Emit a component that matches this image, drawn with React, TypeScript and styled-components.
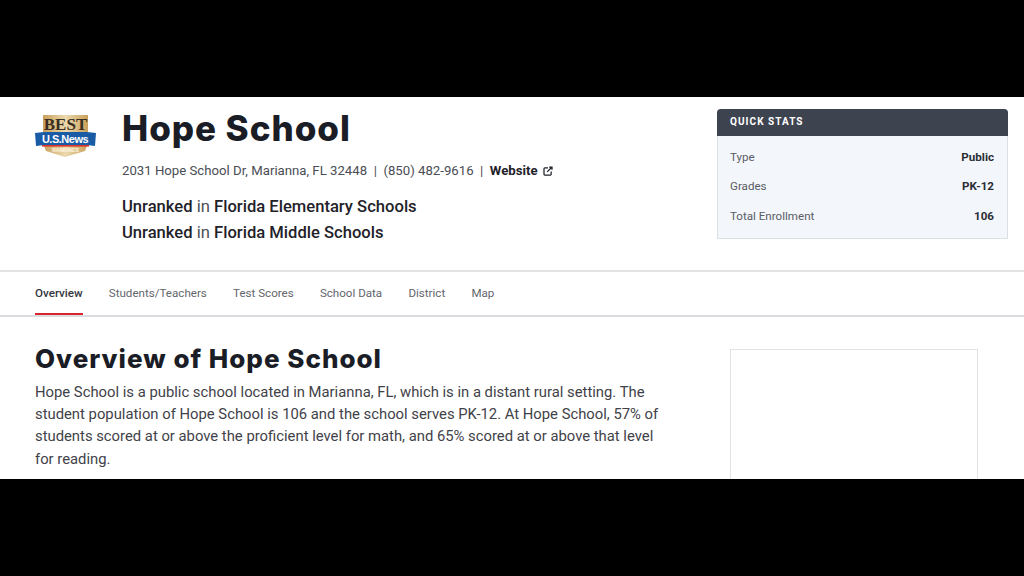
import React from "react";
import styled, { createGlobalStyle } from "styled-components";

const Global = createGlobalStyle`
  html, body { margin: 0; padding: 0; background: #000; }
  body { font-family: Roboto, "Liberation Sans", sans-serif; color: #1f2229; }
  #root { width: 1024px; height: 576px; }
`;
const Frame = styled.div`
  width: 1024px; height: 576px; background: #000; padding-top: 97px; box-sizing: border-box;
`;
const Page = styled.div`
  width: 1024px; height: 382px; background: #fff; overflow: hidden; display: flex; flex-direction: column;
`;
const Header = styled.header`
  height: 175px; box-sizing: border-box; display: flex; border-bottom: 2px solid #e2e3e5; flex: none;
`;
const LogoBox = styled.div`
  width: 122px; flex: none; padding: 18px 0 0 35px; box-sizing: border-box;
`;
const Info = styled.div`
  width: 595px; flex: none; display: flex; flex-direction: column;
`;
const Title = styled.h1`
  margin: 9px 0 0; font: 800 35px/44px Inter, sans-serif; letter-spacing: 0.95px; color: #1a1d26;
`;
const Contact = styled.div`
  margin-top: 11px; font-size: 13.2px; line-height: 20px; color: #4a4d55; display: flex; align-items: center; white-space: pre;
`;
const WebLink = styled.span`
  font-weight: 700; color: #1f2229;
`;
const Rank = styled.div`
  font-size: 16.6px; line-height: 26px; color: #4a4d55;
  b { font-weight: 500; color: #1f2229; }
`;
const Ranks = styled.div`
  margin-top: 13px;
`;
const Stats = styled.aside`
  width: 291px; height: 130px; margin-top: 12px; box-sizing: border-box; border: 1px solid #dcdfe3; border-top: 0;
  border-radius: 4px 4px 0 0; background: #f3f6fa; display: flex; flex-direction: column;
`;
const StatsHead = styled.div`
  height: 27px; margin: 0 -1px; background: #3e4350; border-radius: 4px 4px 0 0; color: #fff; flex: none;
  font-size: 10px; font-weight: 700; letter-spacing: 1.05px; line-height: 26px; padding-left: 13px;
`;
const StatRows = styled.div`
  padding: 6.4px 13px 0 12px; display: flex; flex-direction: column;
`;
const StatRow = styled.div`
  height: 29.3px; display: flex; justify-content: space-between; align-items: center; font-size: 11.6px; color: #5a5d65;
  b { font-weight: 700; color: #2a2d35; }
`;
const Tabs = styled.nav`
  height: 45px; flex: none; box-sizing: border-box; display: flex; gap: 26.2px; padding-left: 35px; border-bottom: 2px solid #dcdde0;
`;
const Tab = styled.a<{ $active?: boolean }>`
  font-size: 11.6px; line-height: 42px; height: 43px; box-sizing: border-box; color: ${p => (p.$active ? "#33363d" : "#63666d")};
  font-weight: ${p => (p.$active ? 500 : 400)};
  border-bottom: ${p => (p.$active ? "2px solid #d9232e" : "none")};
`;
const Body = styled.main`
  display: flex; flex: 1; min-height: 0;
`;
const Copy = styled.section`
  width: 730px; flex: none; padding: 25px 0 0 35px; box-sizing: border-box;
`;
const H2 = styled.h2`
  margin: 0; font: 800 26px/34px Inter, sans-serif; letter-spacing: 1px; color: #1a1d26;
`;
const Para = styled.p`
  margin: 5px 0 0; width: 632px; font-size: 14.82px; line-height: 22.2px; color: #3f4249;
`;
const Ad = styled.div`
  width: 248px; height: 200px; margin-top: 32px; box-sizing: border-box; border: 1px solid #e2e3e5; flex: none;
`;

const Logo = () => (
  <svg width="62" height="44" viewBox="0 0 62 44">
    <defs>
      <linearGradient id="gold" x1="0" y1="0" x2="1" y2="0">
        <stop offset="0" stopColor="#c9a05a" />
        <stop offset="0.5" stopColor="#ecd9ae" />
        <stop offset="1" stopColor="#c9a05a" />
      </linearGradient>
    </defs>
    <path d="M8 0H53V28L50 36L30 42L11 36L8 28Z" fill="url(#gold)" />
    <text x="30.5" y="15" textAnchor="middle" fontFamily="'Liberation Serif', serif" fontWeight="700" fontSize="17" fill="#3a2e22">BEST</text>
    <path d="M0 18L9 17H52L61 18L60 31L52 30H9L1 31Z" fill="#1a5ba6" />
    <text x="30" y="28" textAnchor="middle" fontFamily="'Liberation Sans', sans-serif" fontWeight="700" fontSize="11" letterSpacing="-0.5" fill="#fff">U.S.News</text>
    <rect x="7" y="30" width="47" height="1.6" fill="#d9332e" />
    <text x="30.5" y="37" textAnchor="middle" fontFamily="'Liberation Sans', sans-serif" fontSize="5" fontWeight="700" fill="#fff6e0">RANKINGS</text>
  </svg>
);

const ExtIcon = () => (
  <svg width="10" height="10" viewBox="0 0 12 12" fill="none" stroke="#1f2229" strokeWidth="1.5" style={{ marginLeft: 5 }}>
    <path d="M6 2.2H2.2a1 1 0 0 0-1 1v6.6a1 1 0 0 0 1 1h6.6a1 1 0 0 0 1-1V6.5" />
    <path d="M5 7L10.5 1.5M7.4 1.2h3.4v3.4" />
  </svg>
);

export default function App() {
  return (
    <Frame>
      <Global />
      <Page>
        <Header>
          <LogoBox><Logo /></LogoBox>
          <Info>
            <Title>Hope School</Title>
            <Contact>
              2031 Hope School Dr, Marianna, FL 32448{"  |  "}(850) 482-9616{"  |  "}<WebLink>Website</WebLink><ExtIcon />
            </Contact>
            <Ranks>
              <Rank><b>Unranked</b> in <b>Florida Elementary Schools</b></Rank>
              <Rank><b>Unranked</b> in <b>Florida Middle Schools</b></Rank>
            </Ranks>
          </Info>
          <Stats>
            <StatsHead>QUICK STATS</StatsHead>
            <StatRows>
              <StatRow>Type<b>Public</b></StatRow>
              <StatRow>Grades<b>PK-12</b></StatRow>
              <StatRow>Total Enrollment<b>106</b></StatRow>
            </StatRows>
          </Stats>
        </Header>
        <Tabs>
          <Tab $active>Overview</Tab>
          <Tab>Students/Teachers</Tab>
          <Tab>Test Scores</Tab>
          <Tab>School Data</Tab>
          <Tab>District</Tab>
          <Tab>Map</Tab>
        </Tabs>
        <Body>
          <Copy>
            <H2>Overview of Hope School</H2>
            <Para>
              Hope School is a public school located in Marianna, FL, which is in a distant rural setting. The student population of Hope School is 106 and the school serves PK-12. At Hope School, 57% of students scored at or above the proficient level for math, and 65% scored at or above that level for reading.
            </Para>
          </Copy>
          <Ad />
        </Body>
      </Page>
    </Frame>
  );
}
